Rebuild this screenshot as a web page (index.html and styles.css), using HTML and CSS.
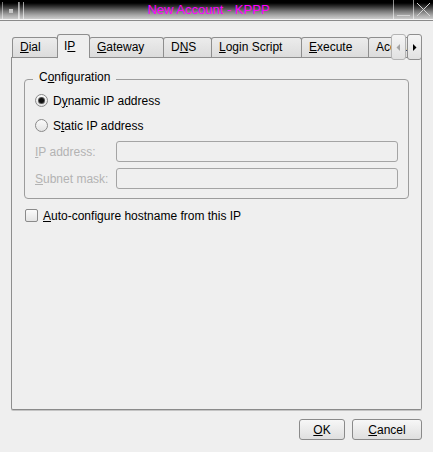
FILE: index.html
```html
<!DOCTYPE html>
<html lang="en">
<head>
    <meta charset="UTF-8">
    <title>New Account - KPPP</title>
    <link rel="stylesheet" href="styles.css">
</head>
<body>
    <div class="window">
        <div class="titlebar">
            <div class="tb-menu"><span class="tb-dot"></span></div>
            <div class="tb-grip"></div>
            <div class="tb-title">New Account - KPPP</div>
            <div class="tb-btn">
                <svg width="19" height="19" viewBox="0 0 19 19"><line x1="3" y1="15.5" x2="16" y2="15.5" stroke="#d4d4d4" stroke-width="1"/></svg>
            </div>
            <div class="tb-btn">
                <svg width="19" height="19" viewBox="0 0 19 19"><path d="M3 3 L16 16 M16 3 L3 16" stroke="#d4d4d4" stroke-width="1" fill="none"/></svg>
            </div>
        </div>

        <div class="dialog">
            <div class="tabstrip">
                <div class="tabs">
                    <div class="tab w-dial"><u>D</u>ial</div>
                    <div class="tab active w-ip">I<u>P</u></div>
                    <div class="tab w-gateway"><u>G</u>ateway</div>
                    <div class="tab w-dns">D<u>N</u>S</div>
                    <div class="tab w-login"><u>L</u>ogin Script</div>
                    <div class="tab w-execute"><u>E</u>xecute</div>
                    <div class="tab w-more">Accounting</div>
                </div>
                <div class="scroll">
                    <div class="scroll-btn">
                        <svg width="5" height="7" viewBox="0 0 5 7"><polygon points="4,0 4,7 0.5,3.5" fill="#a4a4a4"/></svg>
                    </div>
                    <div class="scroll-btn">
                        <svg width="5" height="7" viewBox="0 0 5 7"><polygon points="1,0 1,7 4.5,3.5" fill="#000"/></svg>
                    </div>
                </div>
            </div>

            <div class="panel">
                <fieldset class="group">
                    <legend>C<u>o</u>nfiguration</legend>
                    <div class="option"><span class="radio checked"></span>D<u>y</u>namic IP address</div>
                    <div class="option"><span class="radio"></span>S<u>t</u>atic IP address</div>
                    <div class="field first"><label><u>I</u>P address:</label><span class="input"></span></div>
                    <div class="field"><label><u>S</u>ubnet mask:</label><span class="input"></span></div>
                </fieldset>
                <div class="check-row"><span class="checkbox"></span><u>A</u>uto-configure hostname from this IP</div>
            </div>

            <div class="actions">
                <button class="btn btn-ok"><u>O</u>K</button>
                <button class="btn btn-cancel"><u>C</u>ancel</button>
            </div>
        </div>
    </div>
</body>
</html>
```

FILE: styles.css
```css
body {
    margin: 0;
    background-color: #efefef;
    font-family: "Liberation Sans", Arial, sans-serif;
    font-size: 12px;
    color: #000;
}

u {
    text-underline-offset: 1px;
}

.window {
    width: 433px;
    height: 452px;
    display: flex;
    flex-direction: column;
    overflow: hidden;
}

/* title bar */
.titlebar {
    flex: none;
    display: flex;
    height: 21px;
    box-sizing: border-box;
    background: linear-gradient(to bottom, #000 0, #000 3px, #383838 7px, #767676 11px, #a6a6a6 15px, #cdcdcd 19px);
    border-bottom: 1px solid #8a8a8a;
    box-shadow: inset 0 -1px 0 #f6f6f6;
}

.tb-menu {
    width: 17px;
    margin-left: 2px;
    height: 17px;
    margin-top: 2px;
    box-sizing: border-box;
    border-left: 1px solid rgba(255, 255, 255, 0.45);
    border-right: 1px solid rgba(255, 255, 255, 0.6);
    display: flex;
    align-items: center;
    justify-content: center;
}

.tb-dot {
    width: 4px;
    height: 4px;
    background-color: #c6c6c6;
}

.tb-grip {
    width: 5px;
    height: 17px;
    margin-top: 2px;
    box-sizing: border-box;
    border-left: 1px solid rgba(255, 255, 255, 0.45);
    border-right: 1px solid rgba(255, 255, 255, 0.6);
}

.tb-title {
    flex: 1;
    text-align: center;
    color: #ff00ff;
    font-size: 13px;
    line-height: 18px;
    padding-top: 1px;
}

.tb-btn {
    width: 20px;
    height: 19px;
    box-sizing: border-box;
    border-left: 1px solid rgba(255, 255, 255, 0.55);
}

.tb-btn svg {
    display: block;
}

/* dialog */
.dialog {
    flex: 1;
    display: flex;
    flex-direction: column;
    padding: 13px 11px 12px;
    min-height: 0;
}

.tabstrip {
    flex: none;
    position: relative;
    height: 23px;
    z-index: 2;
}

.tabs {
    display: flex;
    align-items: flex-end;
    height: 24px;
    padding-left: 1px;
    overflow: hidden;
}

.tab {
    flex: none;
    box-sizing: border-box;
    height: 20px;
    margin-bottom: 1px;
    margin-left: -1px;
    padding-left: 7px;
    line-height: 18px;
    white-space: nowrap;
    overflow: hidden;
    border: 1px solid #8e8e8e;
    border-bottom: none;
    border-radius: 3px 3px 0 0;
    background: linear-gradient(to bottom, #ececec, #dcdcdc);
}

.tab:first-child {
    margin-left: 0;
}

.tab.active {
    position: relative;
    z-index: 1;
    height: 24px;
    margin-bottom: 0;
    padding-left: 6px;
    line-height: 22px;
    background: #efefef;
}

.w-dial { width: 46px; }
.w-ip { width: 33px; }
.w-gateway { width: 75px; }
.w-dns { width: 49px; }
.w-login { width: 91px; }
.w-execute { width: 68px; }
.w-more { width: 90px; }

.scroll {
    position: absolute;
    top: 0;
    right: 0;
    display: flex;
    gap: 1px;
    z-index: 3;
}

.scroll-btn {
    width: 15px;
    height: 26px;
    box-sizing: border-box;
    border: 1px solid #8e8e8e;
    border-radius: 3px;
    background: linear-gradient(to bottom, #f5f5f5, #e1e1e1);
    display: flex;
    align-items: center;
    justify-content: center;
}

.scroll-btn:first-child {
    border-color: #b4b4b4;
}

.panel {
    flex: 1;
    min-height: 0;
    border: 1px solid #8e8e8e;
    border-bottom-color: #8a8a8a;
    border-radius: 0 0 2px 2px;
    box-shadow: 0 1px 0 #c4c4c4;
}

/* group box */
.group {
    margin: 12px 12px 0;
    padding: 0 10px 9px;
    border: 1px solid #9c9c9c;
    border-radius: 4px;
    min-width: 0;
}

.group legend {
    margin-left: -2px;
    padding: 0 6px 4px;
    line-height: 14px;
}

.option {
    display: flex;
    align-items: center;
    height: 25px;
}

.radio {
    width: 13px;
    height: 13px;
    box-sizing: border-box;
    margin-right: 5px;
    border: 1px solid #8a8a8a;
    border-radius: 50%;
    background: linear-gradient(to bottom, #fafafa, #e4e4e4);
    display: flex;
    align-items: center;
    justify-content: center;
}

.radio.checked::after {
    content: "";
    width: 5px;
    height: 5px;
    border-radius: 50%;
    background-color: #111;
    box-shadow: 0 0 0 1px #555;
}

.field {
    display: flex;
    align-items: center;
    margin-top: 6px;
}

.field.first {
    margin-top: 3px;
}

.field label {
    width: 81px;
    flex: none;
    color: #b3b3b3;
}

.input {
    flex: 1;
    height: 21px;
    box-sizing: border-box;
    border: 1px solid #a4a4a4;
    border-radius: 3px;
    background-color: #efefef;
}

.check-row {
    display: flex;
    align-items: center;
    height: 25px;
    margin: 4px 0 0 13px;
}

.checkbox {
    width: 13px;
    height: 13px;
    box-sizing: border-box;
    margin-right: 5px;
    border: 1px solid #8a8a8a;
    border-radius: 2px;
    background: linear-gradient(to bottom, #fafafa, #e4e4e4);
}

/* buttons */
.actions {
    flex: none;
    display: flex;
    justify-content: flex-end;
    gap: 7px;
    margin-top: 9px;
}

.btn {
    height: 21px;
    padding: 0;
    font-family: "Liberation Sans", Arial, sans-serif;
    font-size: 12px;
    color: #000;
    border: 1px solid #8a8a8a;
    border-radius: 3px;
    background: linear-gradient(to bottom, #f7f7f7, #dfdfdf);
}

.btn-ok { width: 46px; }
.btn-cancel { width: 70px; }
```
